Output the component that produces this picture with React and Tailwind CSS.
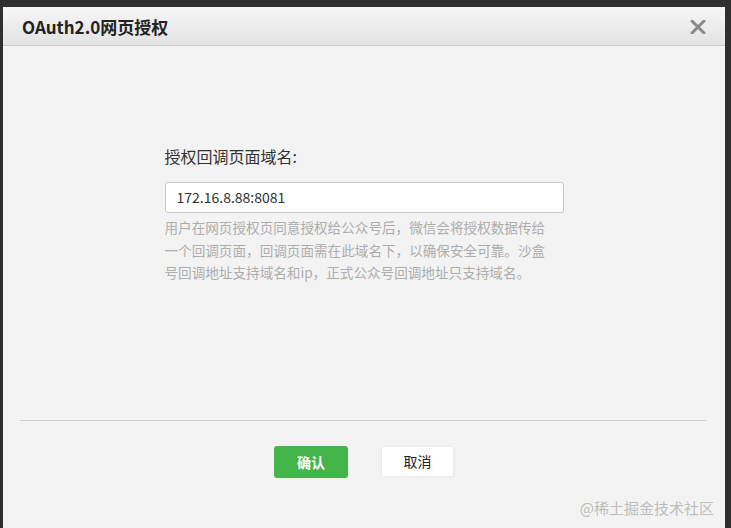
export default function App() {
  const font = { fontFamily: '"Noto Sans CJK SC", "Noto Sans", sans-serif' };
  return (
    <div className="w-[731px] h-[528px] bg-[#2f2f2f] pt-[7px] pl-[3px] pr-[6px] overflow-hidden" style={font}>
      <div className="h-full bg-[#f3f3f3] flex flex-col relative">
        <div className="h-[39px] shrink-0 border-b border-[#c8c8c8] bg-gradient-to-b from-[#f6f6f6] to-[#e3e3e3] flex items-center justify-between pl-[19px] pr-[19px]">
          <span className="text-[17px] font-bold text-[#222] leading-none">OAuth2.0网页授权</span>
          <svg width="16" height="14" viewBox="0 0 16 14" className="mt-[2px]">
            <path d="M2 1 L14 13 M14 1 L2 13" stroke="#8a8a8a" strokeWidth="3" strokeLinecap="round" />
          </svg>
        </div>
        <div className="h-[374px] shrink-0 flex justify-center">
          <div className="w-[399px] pt-[99px]">
            <div className="text-[16px] leading-[22px] text-[#333]">授权回调页面域名:</div>
            <div className="mt-[15px] h-[31px] bg-white border border-[#c9c9c9] rounded-[3px] flex items-center pl-[11px] text-[14px] text-[#333]">
              172.16.8.88:8081
            </div>
            <p className="mt-[3px] w-[390px] text-[13.6px] leading-[22.5px] text-[#adadad]">
              用户在网页授权页同意授权给公众号后，微信会将授权数据传给一个回调页面，回调页面需在此域名下，以确保安全可靠。沙盒号回调地址支持域名和ip，正式公众号回调地址只支持域名。
            </p>
          </div>
        </div>
        <div className="h-px bg-[#cfcfcf] ml-[17px] mr-[19px]" />
        <div className="pt-[25px] flex justify-center gap-[33px]">
          <button className="w-[74px] h-[32px] rounded-[3px] bg-[#44b549] text-white text-[14px] font-bold flex items-center justify-center">确认</button>
          <button className="w-[73px] h-[31px] rounded-[2px] bg-white border border-[#ececec] text-[#222] text-[14px] flex items-center justify-center">取消</button>
        </div>
        <div className="absolute right-[11px] bottom-[10px] text-[15px] leading-[20px] text-[#bdbdbd]">@稀土掘金技术社区</div>
      </div>
    </div>
  );
}
